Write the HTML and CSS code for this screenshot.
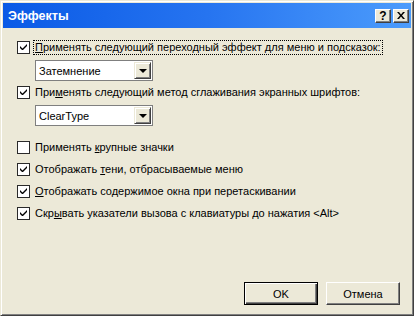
FILE: index.html
```html
<!DOCTYPE html>
<html>
<head>
<meta charset="utf-8">
<link rel="stylesheet" href="styles.css">
</head>
<body>
<div class="window">
  <div class="titlebar">
    <span class="title">Эффекты</span>
    <div class="tbuttons">
      <span class="tbtn">?</span>
      <span class="tbtn close">
        <svg width="8" height="7" viewBox="0 0 8 7"><path d="M0 0h2l2 2.5L6 0h2L5 3.5 8 7H6L4 4.5 2 7H0l3-3.5z" fill="#000"/></svg>
      </span>
    </div>
  </div>
  <div class="content">
    <div class="row"><span class="cb checked"></span><span class="label focus"><u>П</u>рименять следующий переходный эффект для меню и подсказок:</span></div>
    <div class="combo"><span class="ctext">Затемнение</span><span class="cbtn"><span class="arrow"></span></span></div>
    <div class="row"><span class="cb checked"></span><span class="label">При<u>м</u>енять следующий метод сглаживания экранных шрифтов:</span></div>
    <div class="combo last"><span class="ctext">ClearType</span><span class="cbtn"><span class="arrow"></span></span></div>
    <div class="row"><span class="cb"></span><span class="label">Применять <u>к</u>рупные значки</span></div>
    <div class="row"><span class="cb checked"></span><span class="label">Отображать <u>т</u>ени, отбрасываемые меню</span></div>
    <div class="row"><span class="cb checked"></span><span class="label"><u>О</u>тображать содержимое окна при перетаскивании</span></div>
    <div class="row"><span class="cb checked"></span><span class="label">Скр<u>ы</u>вать указатели вызова с клавиатуры до нажатия &lt;Alt&gt;</span></div>
  </div>
  <div class="footer">
    <button class="btn default">OK</button>
    <button class="btn">Отмена</button>
  </div>
</div>
</body>
</html>
```
FILE: styles.css
```css
* { box-sizing: border-box; }
html, body { margin: 0; padding: 0; background: #ECE9D8; }
body { font-family: "Liberation Sans", Arial, sans-serif; font-size: 11px; color: #000; }
.window {
  width: 414px; height: 316px;
  display: flex; flex-direction: column;
  background: #ECE9D8;
  border-top: 1px solid #ECE9D8; border-left: 1px solid #ECE9D8;
  border-right: 1px solid #404040; border-bottom: 1px solid #404040;
  box-shadow: inset 1px 1px 0 #fff, inset -1px -1px 0 #808080;
  padding: 2px;
}
.titlebar {
  height: 25px;
  background: linear-gradient(to right, #0A5AE6 0%, #2674F0 50%, #4C9CFC 100%);
  display: flex; align-items: center; justify-content: space-between;
  padding: 0 2px 0 5px;
}
.title { color: #fff; font-weight: bold; font-size: 12.5px; }
.tbuttons { display: flex; gap: 2px; }
.tbtn {
  width: 16px; height: 14px; background: #ECE9D8;
  display: flex; align-items: center; justify-content: center;
  font-weight: bold; font-size: 12px;
  border-top: 1px solid #fff; border-left: 1px solid #fff;
  border-right: 1px solid #404040; border-bottom: 1px solid #404040;
  box-shadow: inset -1px -1px 0 #808080;
}
.content { flex: 1; padding: 11px 0 0 14px; display: flex; flex-direction: column; }
.row { display: flex; align-items: center; height: 16px; margin-bottom: 6px; white-space: nowrap; }
.cb {
  width: 13px; height: 13px; background: #fff; border: 1px solid #2a2a2a;
  margin-right: 3px; position: relative; flex: none;
}
.cb.checked::after {
  content: ""; position: absolute; left: 1px; top: 1px;
  width: 9px; height: 9px;
  background: url("data:image/svg+xml;utf8,<svg xmlns='http://www.w3.org/2000/svg' width='9' height='9'><path d='M1 3v2l2 2h1l4-4V1L3.5 5.5z' fill='black'/></svg>") no-repeat;
}
.label { padding: 0 1px; line-height: 13px; border: 1px solid transparent; }
.label.focus { border: 1px dotted #000; }
.combo {
  margin: -1px 0 3px 18px; width: 118px; height: 21px; background: #fff;
  border: 1px solid #7F7F7F; display: flex; align-items: center; justify-content: space-between;
  padding: 1px 1px 1px 3px; flex: none;
}
.combo.last { margin-bottom: 13px; }
.cbtn {
  width: 17px; height: 17px; background: #ECE9D8;
  border-top: 1px solid #ECE9D8; border-left: 1px solid #ECE9D8;
  border-right: 1px solid #404040; border-bottom: 1px solid #404040;
  box-shadow: inset 1px 1px 0 #fff, inset -1px -1px 0 #808080;
  display: flex; align-items: center; justify-content: center;
}
.arrow { width: 0; height: 0; border-left: 4px solid transparent; border-right: 4px solid transparent; border-top: 4px solid #000; }
.footer { display: flex; justify-content: flex-end; gap: 8px; padding: 0 11px 8px 0; }
.btn {
  width: 74px; height: 23px; font-family: inherit; font-size: 11px; background: #ECE9D8; color: #000;
  border-top: 1px solid #fff; border-left: 1px solid #fff;
  border-right: 1px solid #404040; border-bottom: 1px solid #404040;
  box-shadow: inset -1px -1px 0 #808080; padding: 0;
}
.btn.default { border: 1px solid #000; box-shadow: inset 1px 1px 0 #fff, inset -1px -1px 0 #404040, inset -2px -2px 0 #808080; }
```
